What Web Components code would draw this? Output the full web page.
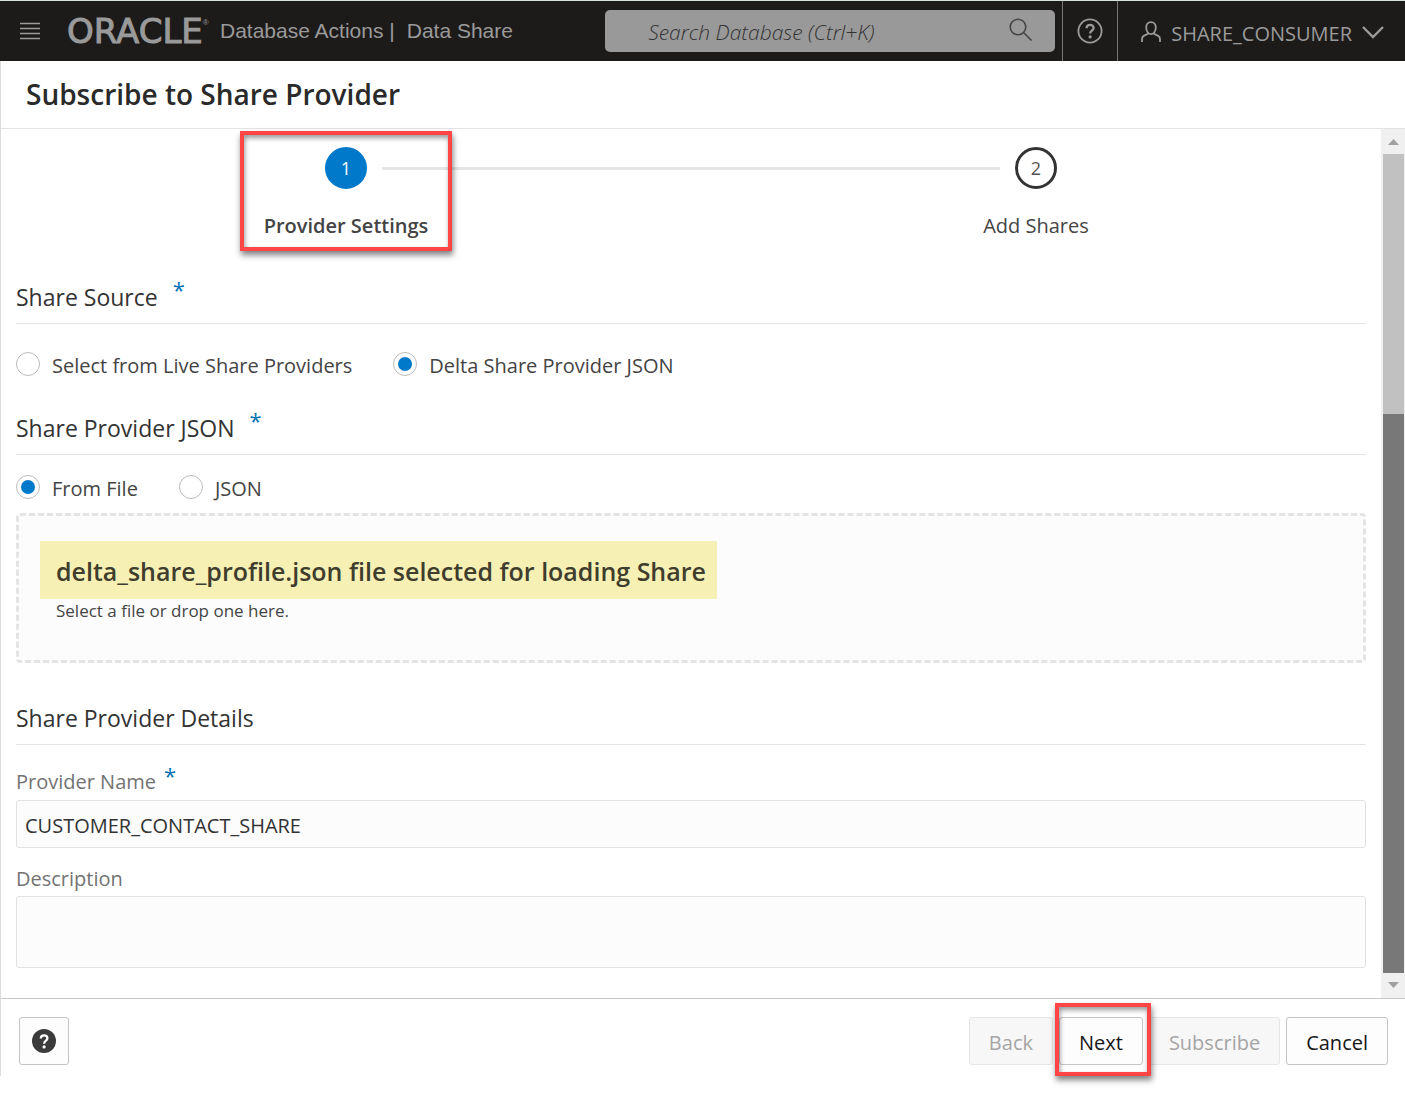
<!DOCTYPE html>
<html lang="en">
<head>
<meta charset="utf-8">
<meta name="viewport" content="width=device-width, initial-scale=1">
<title>Subscribe to Share Provider</title>
<style>
  body {
    margin: 0;
    background: #fff;
    color: #333;
    font-family: "Open Sans", "Noto Sans", sans-serif;
    font-size: 20px;
    line-height: 28px;
  }
</style>
</head>
<body>
<subscribe-page></subscribe-page>

<script>
const define = (name, html, setup) => {
  const template = document.createElement('template');
  template.innerHTML = html;
  customElements.define(name, class extends HTMLElement {
    connectedCallback() {
      if (this.shadowRoot) return;
      const root = this.attachShadow({ mode: 'open' });
      root.append(template.content.cloneNode(true));
      if (setup) setup(this, root);
    }
  });
};

/* Red annotation frame, laid over whatever it wraps */
define('call-out', `
  <style>
    :host { display: block; position: relative; }
    .frame {
      position: absolute;
      inset: var(--frame-inset, -4px);
      border: 4px solid #ff4545;
      box-shadow: 1px 4px 6px rgba(0,0,0,.5), inset 1px 3px 5px rgba(0,0,0,.4);
      pointer-events: none;
      z-index: 1;
    }
  </style>
  <slot></slot><div class="frame"></div>`);

define('app-header', `
  <style>
    :host { display: flex; height: 60px; border-top: 1px solid #d8e2dc; background: #1d1b1a; color: #9a9a9a; align-items: stretch; }
    * { box-sizing: border-box; }
    button { background: none; border: 0; margin: 0; padding: 0; color: inherit; font: inherit; display: flex; align-items: center; justify-content: center; }
    svg { display: block; flex: none; fill: none; stroke: currentColor; }
    .menu { width: 60px; }
    .brand { display: flex; align-items: center; flex: 1; padding-left: 7px; font-family: "Liberation Sans", Arial, sans-serif; font-size: 21px; white-space: nowrap; }
    .logo { width: 153px; display: flex; font: 400 34px/40px "DejaVu Sans", sans-serif; }
    .logo b { font-weight: 400; -webkit-text-stroke: 1px currentColor; }
    .logo sup { font: 8px/24px "Liberation Sans", sans-serif; }
    .area { margin-left: 12px; }
    .search { display: flex; align-items: center; width: 450px; margin: 9px 7px 9px 0; padding: 0 22px 0 43px; border-radius: 5px; background: #999; color: #444; }
    input { flex: 1; min-width: 0; border: 0; padding: 2px 0 0; background: none; outline: 0; font: italic 300 21px/30px "Open Sans", sans-serif; color: #333; }
    input::placeholder { color: #333; opacity: 1; }
    .search button { height: 38px; align-items: flex-start; padding-top: 6px; }
    .help { width: 56px; border: solid #777; border-width: 0 1px; }
    .user { padding: 5px 21px 0 23px; font-size: 20px; gap: 10px; }
    .user svg { margin-bottom: 3px; }
  </style>
  <button class="menu" aria-label="Menu"><svg width="20" height="18" viewBox="0 0 20 18"><path d="M0 1.500h20M0 6.500h20M0 11.500h20M0 16.500h20" stroke-width="1.600"/></svg></button>
  <div class="brand"><span class="logo"><b>ORACLE</b><sup>®</sup></span><span>Database Actions |</span><span class="area">Data Share</span></div>
  <div class="search">
    <input type="text" aria-label="Search Database" placeholder="Search Database (Ctrl+K)">
    <button aria-label="Search"><svg width="24" height="24" viewBox="0 0 24 24" stroke-width="1.600"><circle cx="9" cy="9" r="7.800"/><path d="M14.500 14.500 22.500 22.500"/></svg></button>
  </div>
  <button class="help" aria-label="Help"><svg width="26" height="26" viewBox="0 0 26 26" stroke-width="1.800"><circle cx="13" cy="13" r="11.600"/><path d="M9.600 10.300c0-4.600 7-4.300 7-.3 0 2.600-3.500 2.500-3.500 5.600" stroke-width="2.300"/><circle cx="13.100" cy="18.900" r="1.600" fill="currentColor" stroke="none"/></svg></button>
  <button class="user">
    <svg width="20" height="22" viewBox="0 0 20 22" stroke-width="1.800"><path d="M10 1.200c-3 0-4.800 2.300-4.800 5.200 0 3.800 2.200 6.800 4.800 6.800s4.800-3 4.800-6.800C14.800 3.500 13 1.200 10 1.200ZM7.500 12.500 2.800 14.900Q1 15.800 1 18v3M12.500 12.500l4.700 2.400Q19 15.800 19 18v3"/></svg>
    <span>SHARE_CONSUMER</span>
    <svg width="22" height="14" viewBox="0 0 22 14" stroke-width="2.400"><path d="m1 2 10 10L21 2"/></svg>
  </button>`);

define('wizard-step', `
  <style>
    :host { display: flex; flex-direction: column; align-items: center; }
    .dot { box-sizing: border-box; width: 42px; height: 42px; border: 3px solid #333; border-radius: 50%; display: grid; place-items: center; font-size: 18px; color: #555; }
    .label { margin-top: 23px; white-space: nowrap; color: #444; }
    :host([current]) .dot { background: #0079ca; border-color: #0079ca; color: #fff; }
    :host([current]) .label { font-weight: 600; color: #444; }
  </style>
  <span class="dot"></span><span class="label"><slot></slot></span>`,
  (host, root) => { root.querySelector('.dot').textContent = host.getAttribute('number'); });

define('wizard-train', `
  <style>
    :host { display: grid; grid-template-columns: repeat(4, 1fr); padding-top: 18px; }
    .first { grid-area: 1 / 1 / 2 / 3; justify-self: center; --frame-inset: -16px -24px -11px -24px; }
    .second { grid-area: 1 / 3 / 2 / 5; }
    .line { grid-area: 1 / 2 / 2 / 4; height: 3px; margin: 20px 36px 0; background: #e5e5e5; }
  </style>
  <div class="line"></div>
  <call-out class="first"><wizard-step number="1" current>Provider Settings</wizard-step></call-out>
  <wizard-step class="second" number="2">Add Shares</wizard-step>`);

define('section-title', `
  <style>
    :host { display: block; border-bottom: 1px solid #e3e3e3; }
    h2 { margin: 0; padding-bottom: 11px; font-size: 23px; line-height: 30px; font-weight: 400; color: #333; display: flex; gap: 15px; }
    .star { display: none; color: #0572b3; font-size: 22px; line-height: 14px; }
    :host([required]) .star { display: block; }
  </style>
  <h2><slot></slot><span class="star">*</span></h2>`);

define('radio-group', `
  <style>
    :host { display: flex; gap: 41px; }
    label { display: flex; align-items: center; gap: 12px; color: #444; line-height: 28px; }
    input { appearance: none; box-sizing: border-box; width: 24px; height: 24px; margin: 0 0 4px; border: 1px solid #bbb; border-radius: 50%; background: #fff; display: grid; place-items: center; }
    input:checked::before { content: ""; width: 14px; height: 14px; border-radius: 50%; background: #0079ca; }
  </style>`,
  (host, root) => {
    host.getAttribute('options').split('|').forEach((text, i) => {
      const label = document.createElement('label');
      const input = document.createElement('input');
      input.type = 'radio';
      input.name = 'choice';
      input.checked = i === Number(host.getAttribute('selected'));
      label.append(input, text);
      root.append(label);
    });
  });

define('drop-zone', `
  <style>
    :host { display: flex; flex-direction: column; align-items: flex-start; box-sizing: border-box; padding: 25px 21px 37px; border: 3px dashed #e4e4e4; border-radius: 4px; background: #fcfcfc; }
    strong { padding: 14px 11px 12px 16px; background: #f7f0b4; color: #3f3d2d; font-size: 25px; line-height: 32px; font-weight: 600; }
    small { padding-left: 16px; font-size: 17px; line-height: 24px; color: #444; }
  </style>
  <strong><slot name="status"></slot></strong><small><slot></slot></small>`);

define('text-field', `
  <style>
    :host { display: block; }
    * { box-sizing: border-box; }
    label { display: flex; gap: 8px; color: #737373; line-height: 32px; }
    .star { display: none; color: #0572b3; font-size: 22px; line-height: 18px; }
    :host([required]) .star { display: block; }
    input, textarea { display: block; width: 100%; height: 48px; margin: 2px 0 0; padding: 2px 8px 0; border: 1px solid #e2e2e2; border-radius: 3px; background: #fcfcfc; color: #333; font: inherit; outline: 0; resize: none; }
    textarea { height: 72px; margin: 1px 0 0; }
  </style>`,
  (host, root) => {
    const label = document.createElement('label');
    label.htmlFor = 'field';
    const star = document.createElement('span');
    star.className = 'star';
    star.textContent = '*';
    label.append(host.getAttribute('label'));
    if (host.hasAttribute('required')) label.append(star);
    const field = document.createElement(host.hasAttribute('multiline') ? 'textarea' : 'input');
    field.id = 'field';
    field.value = host.getAttribute('value') || '';
    root.append(label, field);
  });

define('scroll-rail', `
  <style>
    :host { display: flex; flex-direction: column; width: 21px; padding: 0 1px 0 2px; background: #f0f0f0; }
    svg { display: block; width: 21px; height: 25px; fill: #a0a0a0; }
    .thumb { flex: 260; background: #c1c1c1; }
    .rest { flex: 559; background: #787878; }
  </style>
  <svg viewBox="0 0 21 25"><path d="M5 16 10.500 10 16 16z"/></svg>
  <div class="thumb"></div><div class="rest"></div>
  <svg viewBox="0 0 21 25"><path d="M5 9h11L10.500 15z"/></svg>`);

define('action-button', `
  <style>
    :host { display: block; }
    button { box-sizing: border-box; height: 48px; padding: 3px 19px 0; border: 1px solid #c4c4c4; border-radius: 3px; background: #fdfdfd; color: #161616; font: inherit; display: flex; align-items: center; }
    button:disabled { background: #f7f7f7; border-color: #e6e6e6; color: #a5a5a5; }
    :host([icon]) button { padding: 0 12px; }
  </style>
  <button><slot></slot></button>`,
  (host, root) => {
    const button = root.querySelector('button');
    button.disabled = host.hasAttribute('disabled');
    if (host.hasAttribute('icon')) button.setAttribute('aria-label', host.getAttribute('icon'));
  });

define('action-bar', `
  <style>
    :host { display: flex; align-items: center; gap: 6px; padding: 18px 17px 11px 18px; border-top: 1px solid #c8c8c8; }
    .spacer { flex: 1; }
    call-out { --frame-inset: -14px -8px -11px -4px; }
    svg { display: block; }
  </style>
  <action-button icon="Help"><svg width="24" height="24" viewBox="0 0 24 24"><circle cx="12" cy="12" r="12" fill="#3b3b3b"/><path d="M8.800 9.500c0-4.400 6.600-4.100 6.600-.3 0 2.500-3.300 2.400-3.300 5.500" fill="none" stroke="#fff" stroke-width="2.300"/><circle cx="12.100" cy="17.900" r="1.600" fill="#fff"/></svg></action-button>
  <span class="spacer"></span>
  <action-button disabled>Back</action-button>
  <call-out><action-button>Next</action-button></call-out>
  <action-button disabled>Subscribe</action-button>
  <action-button>Cancel</action-button>`);

define('subscribe-page', `
  <style>
    :host { display: block; padding-bottom: 16px; }
    .panel { border-left: 1px solid #dcdcdc; }
    h1 { margin: 0; padding: 15px 25px 16px; font-size: 28px; line-height: 36px; font-weight: 600; color: #2a2a2a; border-bottom: 1px solid #e3e3e3; }
    .body { display: flex; }
    main { flex: 1; min-width: 0; }
    .form { padding: 0 15px 30px; display: flex; flex-direction: column; }
    .source { margin-top: 42px; }
    .gap-l { margin: 28px 0 33px; }
    .gap-s { margin: 20px 0 10px; }
    .details { margin: 40px 0 21px; }
    .desc { margin-top: 15px; }
  </style>
  <app-header></app-header>
  <div class="panel">
    <h1>Subscribe to Share Provider</h1>
    <div class="body">
      <main>
        <wizard-train></wizard-train>
        <div class="form">
          <section-title class="source" required>Share Source</section-title>
          <radio-group class="gap-l" selected="1" options="Select from Live Share Providers|Delta Share Provider JSON"></radio-group>
          <section-title required>Share Provider JSON</section-title>
          <radio-group class="gap-s" selected="0" options="From File|JSON"></radio-group>
          <drop-zone><span slot="status">delta_share_profile.json file selected for loading Share</span>Select a file or drop one here.</drop-zone>
          <section-title class="details">Share Provider Details</section-title>
          <text-field label="Provider Name" value="CUSTOMER_CONTACT_SHARE" required></text-field>
          <text-field class="desc" label="Description" multiline></text-field>
        </div>
      </main>
      <scroll-rail></scroll-rail>
    </div>
    <action-bar></action-bar>
  </div>`);
</script>
</body>
</html>
